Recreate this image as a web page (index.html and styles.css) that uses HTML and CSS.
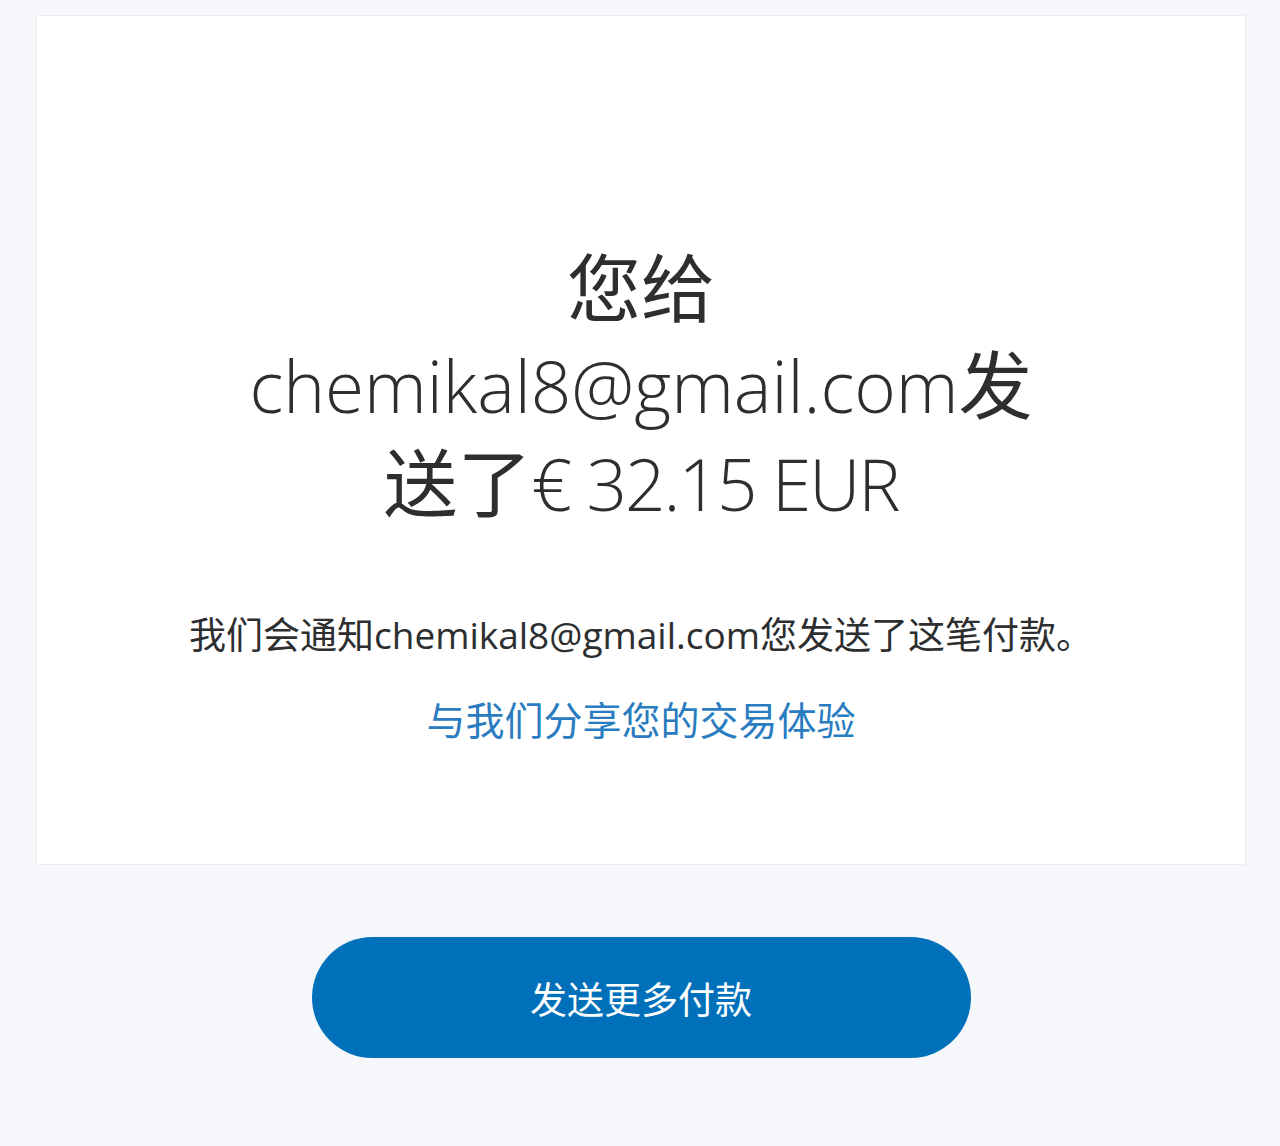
FILE: index.html
```html
<!DOCTYPE html>
<html lang="zh-CN">
<head>
    <meta charset="utf-8">
    <title>付款已发送</title>
    <link rel="stylesheet" href="styles.css">
</head>
<body>
    <div class="page">
        <div class="card">
            <h1 class="title">您给<br><span class="latin">chemikal8@gmail.com</span>发<br>送了<span class="latin amount">€ 32.15 EUR</span></h1>
            <p class="note">我们会通知chemikal8@gmail.com您发送了这笔付款。</p>
            <a class="feedback" href="#">与我们分享您的交易体验</a>
        </div>
        <div class="actions">
            <button class="primary">发送更多付款</button>
        </div>
    </div>
</body>
</html>
```

FILE: styles.css
```css
body {
    margin: 0;
    background-color: #f5f7fa;
    font-family: "Open Sans", "Noto Sans CJK SC", sans-serif;
    color: #2c2e2f;
}
.page {
    padding: 15px 34px 0 36px;
}
.card {
    background-color: #fff;
    border: 1px solid #eaedf0;
    border-radius: 2px;
    height: 850px;
    box-sizing: border-box;
    padding-top: 223px;
    display: flex;
    flex-direction: column;
    align-items: center;
    text-align: center;
}
.title {
    margin: 0;
    font-size: 74px;
    line-height: 97px;
    font-weight: 400;
    color: #2c2e2f;
}
.title .latin {
    font-size: 71px;
    font-weight: 300;
}
.title .amount {
    letter-spacing: -2px;
}
.note {
    margin: 79px 0 0;
    font-size: 37px;
    line-height: 48px;
    color: #2c2e2f;
    letter-spacing: 0;
}
.feedback {
    margin-top: 37px;
    font-size: 39px;
    line-height: 48px;
    color: #2a7cc0;
    text-decoration: none;
}
.actions {
    display: flex;
    justify-content: center;
    padding-top: 72px;
}
.primary {
    width: 659px;
    height: 121px;
    border: none;
    border-radius: 61px;
    background-color: #0070ba;
    color: #fff;
    font-family: "Open Sans", "Noto Sans CJK SC", sans-serif;
    font-size: 37px;
    cursor: pointer;
}
```
